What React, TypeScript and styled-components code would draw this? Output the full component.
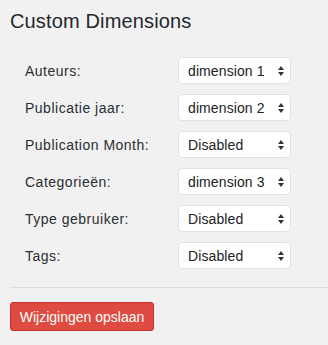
import React from "react";
import styled, { createGlobalStyle } from "styled-components";

const Global = createGlobalStyle`
  html, body { margin: 0; padding: 0; background: #f1f1f1; }
  body { font-family: "Liberation Sans", Arial, sans-serif; color: #23282d; }
`;

const Page = styled.div`
  width: 328px;
  height: 345px;
  padding: 10px 0 0 10px;
  box-sizing: border-box;
  overflow: hidden;
`;

const Title = styled.h2`
  margin: 0;
  font-size: 20px;
  font-weight: 400;
  line-height: 23px;
  letter-spacing: 0.15px;
  color: #23282d;
`;

const Form = styled.div`
  display: flex;
  flex-direction: column;
  padding: 19px 0 13px 15px;
  border-bottom: 1px solid #dcdcdc;
`;

const Row = styled.div`
  display: flex;
  align-items: center;
  height: 37px;
`;

const Label = styled.label`
  width: 153px;
  font-size: 14px;
  letter-spacing: 0.5px;
  color: #2a2e33;
`;

const SelectBox = styled.div`
  position: relative;
  width: 113px;
  height: 27px;
  box-sizing: border-box;
  background: #fff;
  border: 1px solid #e2e2e2;
  border-radius: 4px;
  display: flex;
  align-items: center;
  padding-left: 9px;
  font-size: 14px;
  letter-spacing: 0.1px;
  color: #222;
`;

const Arrows = styled.svg`
  position: absolute;
  right: 6px;
  top: 8px;
`;

const Footer = styled.div`
  padding-top: 14px;
`;

const Button = styled.button`
  width: 144px;
  height: 29px;
  box-sizing: border-box;
  background: #df4b40;
  border: 1px solid #c53227;
  border-radius: 3px;
  color: #fff;
  font-family: "Liberation Sans", Arial, sans-serif;
  font-size: 14px;
  padding: 0;
`;

const rows: [string, string][] = [
  ["Auteurs:", "dimension 1"],
  ["Publicatie jaar:", "dimension 2"],
  ["Publication Month:", "Disabled"],
  ["Categorieën:", "dimension 3"],
  ["Type gebruiker:", "Disabled"],
  ["Tags:", "Disabled"],
];

export default function App() {
  return (
    <Page>
      <Global />
      <Title>Custom Dimensions</Title>
      <Form>
        {rows.map(([l, v]) => (
          <Row key={l}>
            <Label>{l}</Label>
            <SelectBox>
              {v}
              <Arrows width="6" height="10" viewBox="0 0 6 10">
                <path d="M3 0 L6 4 L0 4 Z" fill="#333" />
                <path d="M0 6 L6 6 L3 10 Z" fill="#333" />
              </Arrows>
            </SelectBox>
          </Row>
        ))}
      </Form>
      <Footer>
        <Button>Wijzigingen opslaan</Button>
      </Footer>
    </Page>
  );
}
